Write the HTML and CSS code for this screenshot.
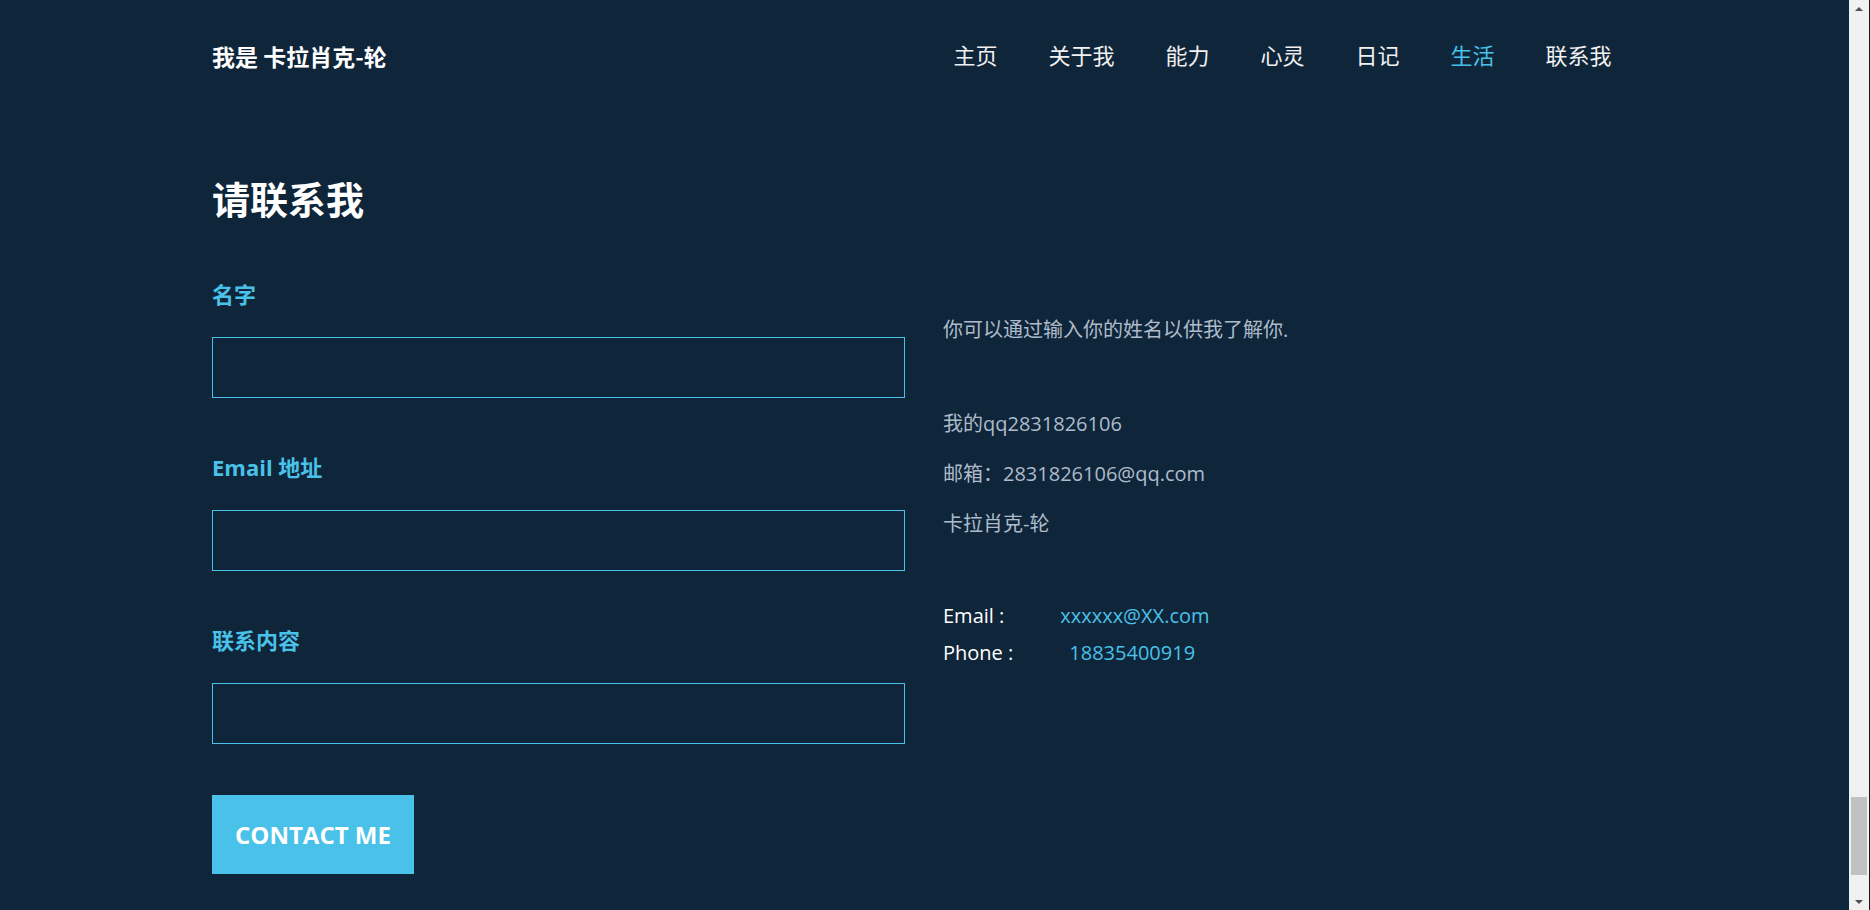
FILE: index.html
```html
<!DOCTYPE html>
<html lang="zh-CN">
<head>
<meta charset="utf-8">
<title>联系我</title>
<link rel="stylesheet" href="styles.css">
</head>
<body>
<div class="page">
  <div class="main">
    <div class="container">
      <header class="header">
        <div class="brand">我是 卡拉肖克-轮</div>
        <nav class="nav">
          <a href="#">主页</a>
          <a href="#">关于我</a>
          <a href="#">能力</a>
          <a href="#">心灵</a>
          <a href="#">日记</a>
          <a href="#" class="active">生活</a>
          <a href="#">联系我</a>
        </nav>
      </header>
      <h2 class="title">请联系我</h2>
      <div class="row">
        <form class="form">
          <div class="field">
            <label class="label">名字</label>
            <input class="input" type="text">
          </div>
          <div class="field">
            <label class="label">Email 地址</label>
            <input class="input" type="text">
          </div>
          <div class="field">
            <label class="label">联系内容</label>
            <input class="input" type="text">
          </div>
          <button class="btn" type="button">CONTACT ME</button>
        </form>
        <div class="info">
          <p class="text t1">你可以通过输入你的姓名以供我了解你.</p>
          <p class="text t2">我的qq2831826106</p>
          <p class="text t3">邮箱：2831826106@qq.com</p>
          <p class="text t4">卡拉肖克-轮</p>
          <p class="contact c1"><span class="key">Email :</span><span class="val">xxxxxx@XX.com</span></p>
          <p class="contact c2"><span class="key">Phone :</span><span class="val">18835400919</span></p>
        </div>
      </div>
    </div>
  </div>
  <div class="scrollbar">
    <div class="arrow up"></div>
    <div class="track"><div class="thumb"></div></div>
    <div class="arrow down"></div>
  </div>
</div>
</body>
</html>
```
FILE: styles.css
```css
* { box-sizing: border-box; }
html, body { margin: 0; padding: 0; height: 100%; overflow: hidden; }
body {
  background: #0f253a;
  font-family: "Open Sans", "Noto Sans CJK SC", sans-serif;
  color: #a9b7c6;
}
.page { display: flex; height: 910px; }
.main { flex: 1; min-width: 0; }
.container { width: 1425px; margin: 0 auto; }

.header {
  height: 112px;
  display: flex;
  align-items: center;
  justify-content: space-between;
}
.brand {
  font-family: "Noto Sans CJK SC", sans-serif;
  font-weight: 700;
  font-size: 23px;
  color: #ffffff;
  line-height: 30px;
}
.nav { display: flex; padding-bottom: 5px; }
.nav a {
  font-family: "Noto Sans CJK SC", sans-serif;
  font-size: 22px;
  line-height: 30px;
  color: #f0f0f0;
  text-decoration: none;
  padding: 0 25.5px;
}
.nav a.active { color: #49c1e8; }

.title {
  margin: 64px 0 0;
  font-family: "Noto Sans CJK SC", sans-serif;
  font-size: 38px;
  line-height: 43px;
  font-weight: 700;
  color: #ffffff;
}

.row { display: flex; gap: 38px; margin-top: 63px; }
.form { width: 693px; display: flex; flex-direction: column; align-items: flex-start; }
.field { width: 100%; display: flex; flex-direction: column; }
.field + .field { margin-top: 57px; }
.label {
  font-size: 22px;
  line-height: 24px;
  font-weight: 700;
  color: #49c1e8;
  margin-bottom: 31px;
}
.input {
  width: 693px;
  height: 61px;
  background: transparent;
  border: 1px solid #49c1e8;
  outline: none;
  color: #fff;
}
.btn {
  margin-top: 51px;
  width: 202px;
  height: 79px;
  background: #49c1e8;
  border: none;
  color: #ffffff;
  font-family: "Open Sans", sans-serif;
  font-weight: 700;
  font-size: 24px;
  padding: 0;
}

.info { padding-top: 34px; }
.text {
  margin: 0;
  font-size: 20px;
  line-height: 28px;
  color: #adbbca;
}
.t2 { margin-top: 66px; }
.t3 { margin-top: 22px; }
.t4 { margin-top: 22px; }
.contact {
  margin: 0;
  font-size: 20px;
  line-height: 28px;
  color: #ffffff;
}
.c1 { margin-top: 64px; }
.c2 { margin-top: 9px; }
.val { color: #49c1e8; margin-left: 56px; }

.scrollbar {
  width: 21px;
  background: #f1f1f1;
  border-right: 1px solid #1a1a1a;
  display: flex;
  flex-direction: column;
}
.arrow { height: 17px; display: flex; justify-content: center; align-items: center; }
.arrow.up::before {
  content: "";
  border-left: 4px solid transparent;
  border-right: 4px solid transparent;
  border-bottom: 4px solid #505050;
}
.arrow.down::before {
  content: "";
  border-left: 4px solid transparent;
  border-right: 4px solid transparent;
  border-top: 4px solid #505050;
}
.track { flex: 1; display: flex; flex-direction: column; justify-content: flex-end; padding: 0 2px 18px; }
.thumb { height: 78px; background: #c1c1c1; }
```
